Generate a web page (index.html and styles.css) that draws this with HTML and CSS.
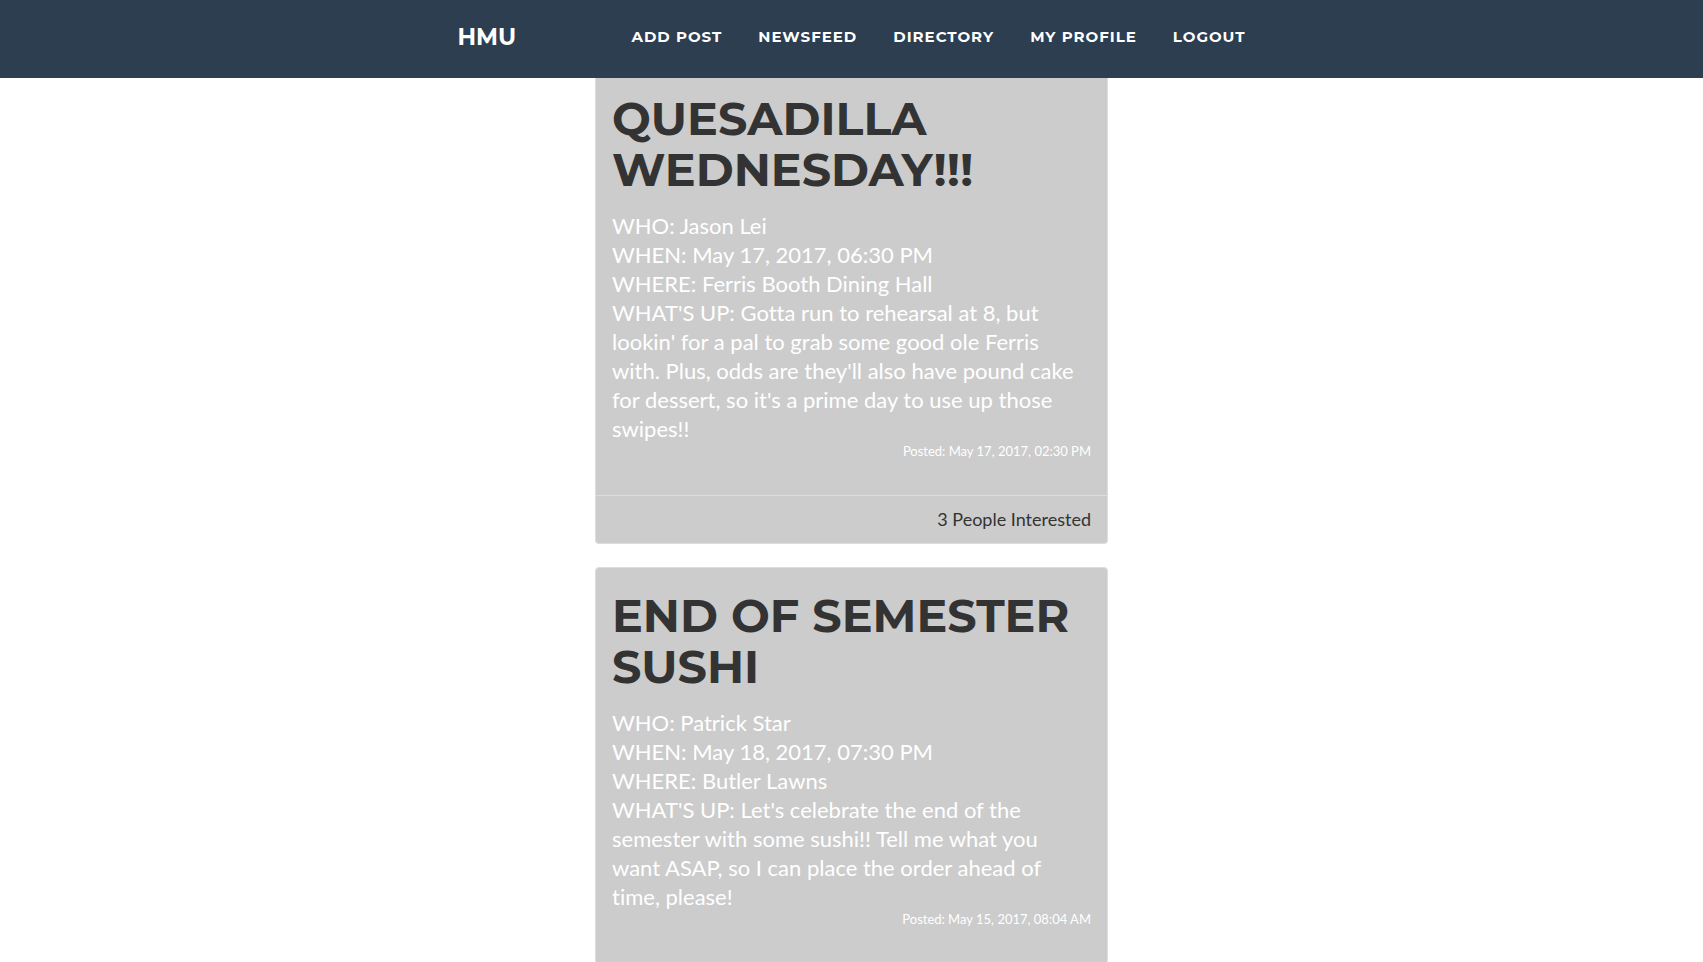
FILE: index.html
```html
<!DOCTYPE html>
<html lang="en">
<head>
<meta charset="utf-8">
<title>HMU</title>
<link rel="stylesheet" href="styles.css">
</head>
<body>
<nav class="navbar">
  <div class="nav-inner">
    <a class="brand" href="#">HMU</a>
    <ul class="nav-links">
      <li><a href="#">Add Post</a></li>
      <li><a href="#">Newsfeed</a></li>
      <li><a href="#">Directory</a></li>
      <li><a href="#">My Profile</a></li>
      <li><a href="#">Logout</a></li>
    </ul>
  </div>
</nav>
<main class="feed">
  <article class="post">
    <div class="post-body">
      <h1>Quesadilla Wednesday!!!</h1>
      <p class="details">WHO: Jason Lei<br>WHEN: May 17, 2017, 06:30 PM<br>WHERE: Ferris Booth Dining Hall<br>WHAT'S UP: Gotta run to rehearsal at 8, but lookin' for a pal to grab some good ole Ferris with. Plus, odds are they'll also have pound cake for dessert, so it's a prime day to use up those swipes!!</p>
      <p class="posted">Posted: May 17, 2017, 02:30 PM</p>
    </div>
    <footer class="interest">3 People Interested</footer>
  </article>
  <article class="post">
    <div class="post-body">
      <h1>End of Semester Sushi</h1>
      <p class="details">WHO: Patrick Star<br>WHEN: May 18, 2017, 07:30 PM<br>WHERE: Butler Lawns<br>WHAT'S UP: Let's celebrate the end of the semester with some sushi!! Tell me what you want ASAP, so I can place the order ahead of time, please!</p>
      <p class="posted">Posted: May 15, 2017, 08:04 AM</p>
    </div>
  </article>
</main>
</body>
</html>
```
FILE: styles.css
```css
* { box-sizing: border-box; }
html { height: 100%; }
body {
  margin: 0;
  height: 100%;
  display: flex;
  flex-direction: column;
  overflow: hidden;
  background: #fff;
  color: #333;
  font-family: Lato, sans-serif;
  font-variant-ligatures: none;
}
a { color: inherit; text-decoration: none; }
.navbar {
  flex: none;
  padding: 14px 0 18px;
  background: #2c3e50;
  color: #fff;
  font-family: Montserrat, "Open Sans", sans-serif;
  font-weight: 700;
  line-height: 24px;
  text-transform: uppercase;
}
.nav-inner {
  display: flex;
  justify-content: space-between;
  align-items: center;
  max-width: 820px;
  margin: 0 auto;
  padding: 0 16px;
  min-height: 46px;
}
.brand { font-size: 23px; }
.nav-links {
  display: flex;
  gap: 36px;
  margin: 0;
  padding: 0;
  list-style: none;
  font-size: 15px;
  letter-spacing: 1px;
}
.feed {
  flex: 1;
  min-height: 0;
  width: 100%;
  max-width: 513px;
  margin: 0 auto;
}
.post {
  margin-bottom: 23px;
  border: 1px solid #ddd;
  border-radius: 4px;
  background: #ccc;
}
.post:first-child {
  border-top: 0;
  border-radius: 0 0 4px 4px;
}
.post-body { padding: 22px 16px 35px; }
.post:first-child .post-body { padding-top: 15px; }
h1 {
  margin: 0 0 16px;
  font: 700 46px/51px Montserrat, "Open Sans", sans-serif;
  text-transform: uppercase;
}
.details {
  margin: 0;
  color: #fff;
  font-size: 22px;
  line-height: 29px;
}
.posted {
  margin: 0;
  color: #fff;
  font-size: 13px;
  line-height: 17px;
  text-align: right;
}
.interest {
  padding: 12px 16px;
  border-top: 1px solid #ddd;
  font-size: 18px;
  line-height: 23px;
  text-align: right;
}
```
